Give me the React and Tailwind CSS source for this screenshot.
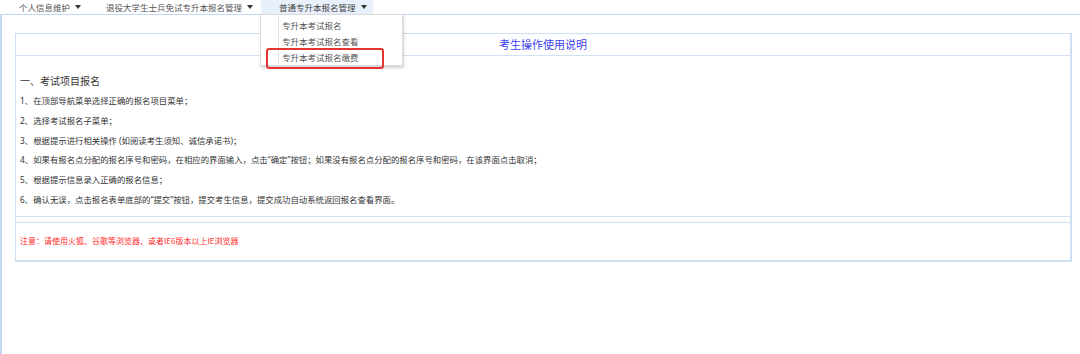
import React from "react";

const FONT = { fontFamily: '"Noto Sans CJK SC", "Noto Sans", sans-serif' };
const BODY = { fontFamily: '"Noto Sans", "Noto Sans CJK SC", sans-serif' };

function Caret() {
  return (
    <svg width="6" height="4" viewBox="0 0 6 4" className="ml-[5px] shrink-0">
      <path d="M0 0 L6 0 L3 4 Z" fill="#333" />
    </svg>
  );
}

const steps = [
  "1、在顶部导航菜单选择正确的报名项目菜单；",
  "2、选择考试报名子菜单；",
  "3、根据提示进行相关操作 (如阅读考生须知、诚信承诺书)；",
  "4、如果有报名点分配的报名序号和密码，在相应的界面输入，点击\u201c确定\u201d按钮；如果没有报名点分配的报名序号和密码，在该界面点击取消；",
  "5、根据提示信息录入正确的报名信息；",
  "6、确认无误，点击报名表单底部的\u201c提交\u201d按钮，提交考生信息，提交成功自动系统返回报名查看界面。",
];

const menu = ["专升本考试报名", "专升本考试报名查看", "专升本考试报名缴费"];

export default function App() {
  return (
    <div className="relative w-[1080px] h-[354px] bg-white overflow-hidden" style={FONT}>
      {/* top nav */}
      <div className="flex h-[14px] items-center text-[8.5px] leading-none text-[#555]">
        <div className="ml-[19px] flex items-center">
          个人信息维护
          <Caret />
        </div>
        <div className="ml-[25px] flex items-center">
          退役大学生士兵免试专升本报名管理
          <Caret />
        </div>
        <div className="ml-[8px] flex h-[14px] items-center rounded-b-[3px] bg-[#e8f0fb] pl-[18px] pr-[6px] text-[#444] shadow-[0_0_1px_#c9d9ef]">
          普通专升本报名管理
          <Caret />
        </div>
      </div>

      {/* frame */}
      <div className="h-[340px] border-l-2 border-t border-[#c3d7f1] pl-[13px] pt-[18px]">
        <div className="w-[1057px] border border-r-2 border-b-2 border-[#cddff1]">
          <div className="flex h-[22px] items-center justify-center border-b border-[#d3e2f2] text-[11px] text-[#3f3ff0]">
            考生操作使用说明
          </div>
          <div className="border-b border-[#d3e2f2] pl-[4px] pt-[15px] pb-[6px] text-[#333]">
            <div className="text-[10px] leading-[20px]">一、考试项目报名</div>
            {steps.map((s) => (
              <div key={s} className="text-[8.4px] leading-[19.8px]" style={BODY}>
                {s}
              </div>
            ))}
          </div>
          <div className="h-[6px] border-b border-[#d3e2f2]" />
          <div className="flex h-[37px] items-center pl-[4px] text-[8px] text-[#ff2a2a]">
            注意：请使用火狐、谷歌等浏览器、或者IE6版本以上IE浏览器
          </div>
        </div>
      </div>

      {/* dropdown */}
      <div className="absolute left-[260px] top-[14px] h-[52px] w-[143px] border border-[#dcdcdc] bg-white pt-[2px] shadow-[1px_2px_3px_rgba(0,0,0,0.18)]">
        <div className="absolute left-[17px] top-0 bottom-0 w-px bg-[#e4e4e4]" />
        {menu.map((m) => (
          <div key={m} className="flex h-[16px] items-center pl-[21px] text-[8.5px] text-[#555]">
            {m}
          </div>
        ))}
      </div>
      <div className="absolute left-[266px] top-[48px] h-[21px] w-[118px] rounded-[3px] border-2 border-[#e5342f]" />
    </div>
  );
}
